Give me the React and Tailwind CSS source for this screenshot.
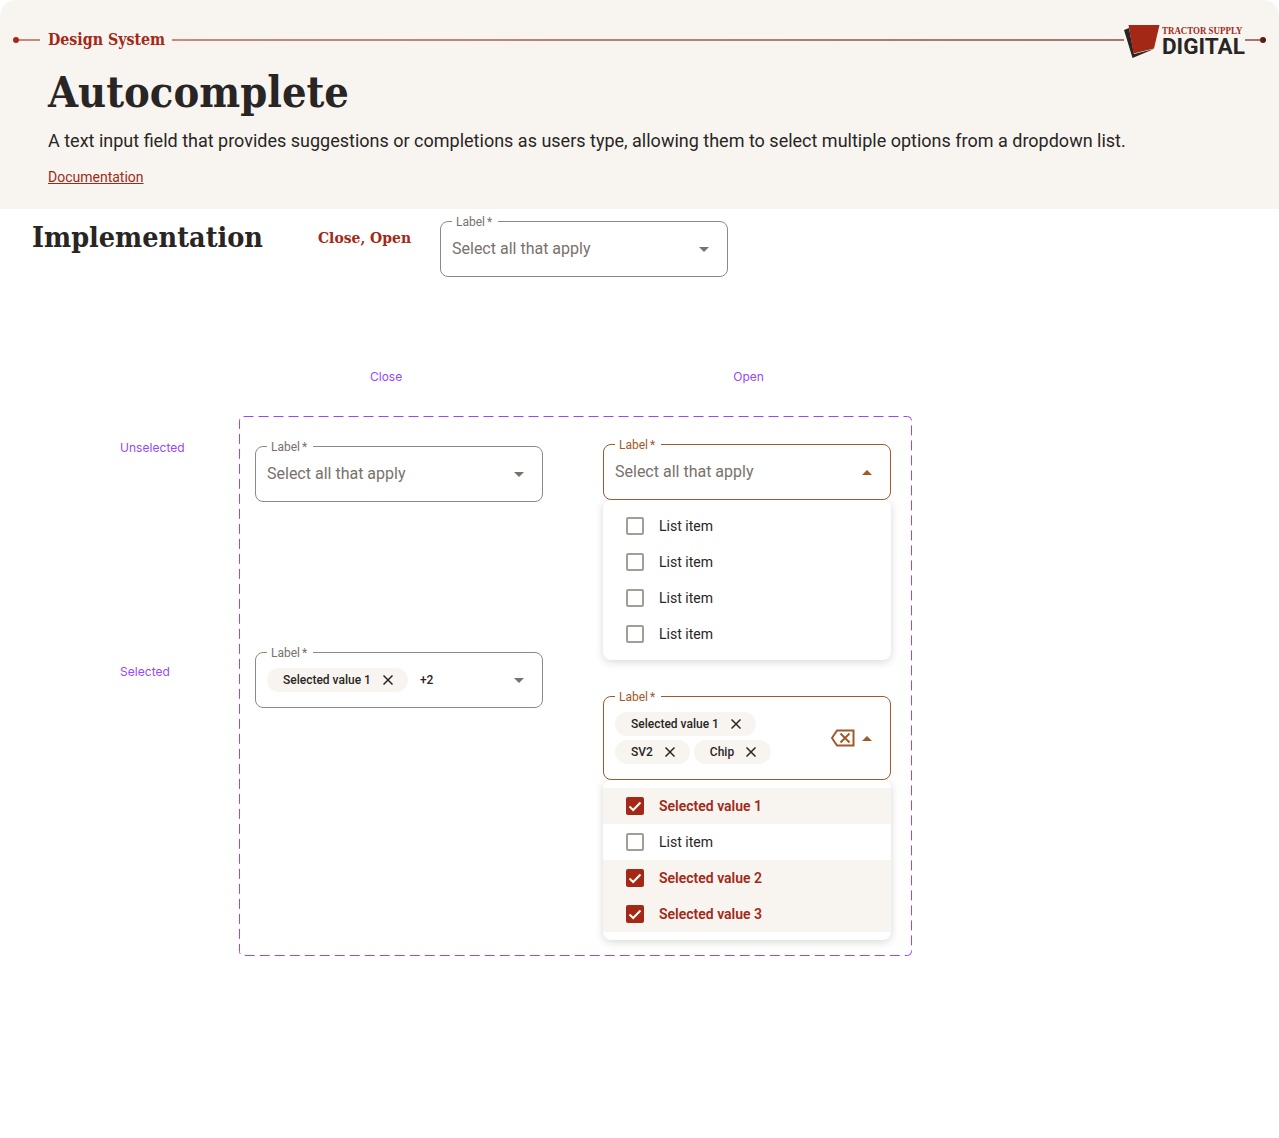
const slab = "font-['DejaVu_Serif_Condensed','DejaVu_Serif',serif] font-bold";
const roboto = "font-['Roboto',sans-serif]";

function Caret({ up, color }) {
  return (
    <svg width="10" height="5" viewBox="0 0 10 5" className="shrink-0">
      <path d={up ? "M0 5L5 0L10 5Z" : "M0 0L5 5L10 0Z"} fill={color} />
    </svg>
  );
}

function X({ size = 10, color = "#292524", sw = 1.5 }) {
  return (
    <svg width={size} height={size} viewBox="0 0 10 10" className="shrink-0">
      <path d="M0.5 0.5L9.5 9.5M9.5 0.5L0.5 9.5" stroke={color} strokeWidth={sw} fill="none" />
    </svg>
  );
}

function Chip({ children }) {
  return (
    <span className="inline-flex h-6 items-center gap-[9px] rounded-full bg-[#f8f5f1] pl-4 pr-3 text-xs font-medium text-[#292524]">
      <span>{children}</span>
      <span className="flex h-4 w-4 items-center justify-center"><X /></span>
    </span>
  );
}

function Field({ open, className = "", height = "h-14", children }) {
  const accent = open ? "#a0592c" : "#8f8983";
  const labelColor = open ? "#a0592c" : "#79716b";
  return (
    <div
      className={`relative flex w-[288px] items-center rounded-lg border bg-white pl-[11px] pr-[18px] ${height} ${className}`}
      style={{ borderColor: accent }}
    >
      <span
        className="absolute left-[11px] top-[-7px] bg-white pl-1 pr-[6px] text-xs leading-[14px]"
        style={{ color: labelColor }}
      >
        Label<span className="ml-0.5">*</span>
      </span>
      <div className="flex min-w-0 flex-1 items-center">{children}</div>
      <Caret up={open} color={open ? "#a0592c" : "#79716b"} />
    </div>
  );
}

function Placeholder() {
  return <span className="text-base text-[#79716b]">Select all that apply</span>;
}

function Box({ checked }) {
  if (checked) {
    return (
      <span className="flex h-[18px] w-[18px] items-center justify-center rounded-[2px] bg-[#a32816]">
        <svg width="14" height="11" viewBox="0 0 14 11">
          <path d="M1.5 5.5L5.2 9L12.5 1.5" stroke="#fff" strokeWidth="2" fill="none" />
        </svg>
      </span>
    );
  }
  return <span className="h-[18px] w-[18px] rounded-[2px] border-2 border-[#a29d97] bg-white" />;
}

function Row({ checked, children }) {
  return (
    <div className={`flex h-9 items-center gap-[15px] pl-[23px] text-sm ${checked ? "bg-[#f8f5f1] font-semibold text-[#a32816]" : "text-[#292524]"}`}>
      <Box checked={checked} />
      <span>{children}</span>
    </div>
  );
}

function Menu({ children }) {
  return (
    <div className="w-[288px] rounded-lg bg-white py-2 shadow-[0_2px_8px_rgba(41,37,36,0.18)]">
      {children}
    </div>
  );
}

function Logo() {
  return (
    <div className="flex shrink-0 items-center">
      <svg width="38" height="36" viewBox="0 0 38 36" className="shrink-0">
        <path d="M0 8L5 6L10 32L30 27L8.5 36Z" fill="#292524" />
        <path d="M4.5 3H35.5L30 26.5L9.5 31.5Z" fill="#a32816" />
      </svg>
      <div className="flex w-[82px] flex-col whitespace-nowrap">
        <span className="origin-left scale-x-[0.81] pt-[1px] font-['Liberation_Serif',serif] text-[11px] font-bold leading-[10px] text-[#a32816]">TRACTOR SUPPLY</span>
        <span className={`${roboto} text-[22.5px] font-bold leading-[22px] text-[#292524]`}>DIGITAL</span>
      </div>
    </div>
  );
}

export default function App() {
  return (
    <div className={`${roboto} min-h-[1138px] bg-white text-[#292524]`}>
      <header className="h-[209px] rounded-t-2xl bg-[#f8f5f1]">
        <div className="flex h-[80px] items-center pl-[13px] pr-[13px]">
          <span className="h-[6px] w-[6px] rounded-full bg-[#a32816]" />
          <span className="h-[2px] w-[21px] bg-[#c78b7e]" />
          <span className={`${slab} ml-2 text-[15.8px] text-[#a32816]`}>Design System</span>
          <span className="ml-[7px] h-[2px] flex-1 bg-gradient-to-r from-[#c78b7e] to-[#a8766c]" />
          <Logo />
          <span className="ml-[1px] h-[2px] w-[15px] bg-[#a8766c]" />
          <span className="h-[6px] w-[6px] rounded-full bg-[#5c1a10]" />
        </div>
        <div className="pl-12">
          <h1 className={`${slab} -mt-[10px] text-[43px] leading-[44px]`}>Autocomplete</h1>
          <p className="mt-[13px] text-lg leading-7">
            A text input field that provides suggestions or completions as users type, allowing them to select multiple options from a dropdown list.
          </p>
          <a className="mt-[12px] block text-sm leading-5 text-[#a32816] underline">Documentation</a>
        </div>
      </header>

      <section className="flex items-start pl-8 pt-3">
        <h2 className={`${slab} w-[286px] text-[28.5px] leading-8`}>Implementation</h2>
        <span className={`${slab} mt-[5px] w-[122px] text-[15.5px] leading-6 text-[#a32816]`}>Close, Open</span>
        <Field><Placeholder /></Field>
      </section>

      <section className="mt-[92px] flex font-['Inter',sans-serif] text-xs leading-4 text-[#9747ff]">
        <span className="ml-[370px]">Close</span>
        <span className="ml-[331px]">Open</span>
      </section>

      <section className="mt-[31px] flex items-start pl-[120px]">
        <div className="flex w-[119px] flex-col font-['Inter',sans-serif] text-xs leading-4 tracking-[0.05px] text-[#9747ff]">
          <span className="mt-6">Unselected</span>
          <span className="mt-[208px]">Selected</span>
        </div>
        <div className="relative flex w-[673px] gap-[60px] pb-4 pl-4 pt-7">
          <svg className="absolute inset-0 h-full w-full" fill="none">
            <rect x="0.5" y="0.5" width="672" height="539" rx="4" stroke="#9747ff" strokeDasharray="10 5" />
          </svg>
          <div className="relative flex w-[288px] flex-col pt-[2px]">
            <Field><Placeholder /></Field>
            <Field className="mt-[150px]">
              <div className="flex items-center gap-3 text-xs font-medium">
                <Chip>Selected value 1</Chip>
                <span>+2</span>
              </div>
            </Field>
          </div>
          <div className="relative flex w-[288px] flex-col">
            <Field open><Placeholder /></Field>
            <Menu>
              <Row>List item</Row>
              <Row>List item</Row>
              <Row>List item</Row>
              <Row>List item</Row>
            </Menu>
            <Field open height="h-[84px]" className="mt-9">
              <div className="flex flex-1 items-center justify-between pr-[7px]">
                <div className="flex w-[170px] flex-wrap gap-1">
                  <Chip>Selected value 1</Chip>
                  <Chip>SV2</Chip>
                  <Chip>Chip</Chip>
                </div>
                <svg width="24" height="18" viewBox="0 0 24 18" className="shrink-0" fill="none" stroke="#a0592c" strokeWidth="2">
                  <path d="M6 1.5H22.5V16.5H6L1 9Z" />
                  <path d="M9.5 4.5L18.5 13.5M18.5 4.5L9.5 13.5" />
                </svg>
              </div>
            </Field>
            <Menu>
              <Row checked>Selected value 1</Row>
              <Row>List item</Row>
              <Row checked>Selected value 2</Row>
              <Row checked>Selected value 3</Row>
            </Menu>
          </div>
        </div>
      </section>
    </div>
  );
}
